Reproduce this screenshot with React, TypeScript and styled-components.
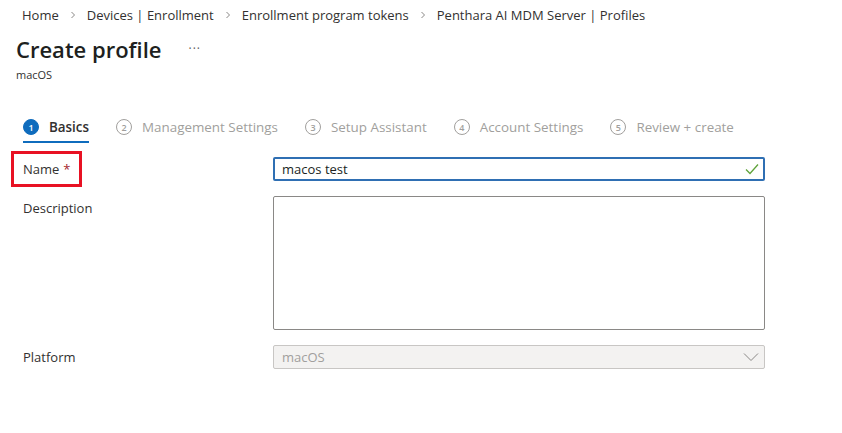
import styled, { createGlobalStyle } from "styled-components";

const Global = createGlobalStyle`
  html, body {
    margin: 0;
    padding: 0;
    background: #fff;
    font-family: "Segoe UI", "Open Sans", "Noto Sans", sans-serif;
    color: #323130;
  }
`;

const Page = styled.div`
  width: 842px;
  height: 433px;
  box-sizing: border-box;
  padding: 5px 0 0 16px;
  overflow: hidden;
`;

const Crumbs = styled.nav`
  display: flex;
  align-items: center;
  height: 20px;
  padding-left: 6px;
  font-size: 13px;
  color: #323130;
`;

const Sep = styled.span`
  display: flex;
  margin: 0 11px;
`;

const TitleRow = styled.div`
  display: flex;
  align-items: center;
  margin-top: 10px;
  height: 28px;
`;

const Title = styled.h1`
  margin: 0;
  font-size: 22px;
  font-weight: 600;
  color: #201f1e;
`;

const More = styled.span`
  margin-left: 27px;
  font-size: 12px;
  color: #605e5c;
  letter-spacing: 1px;
  position: relative;
  top: -1px;
`;

const Sub = styled.div`
  margin-top: 4px;
  font-size: 11px;
  color: #323130;
`;

const Steps = styled.div`
  display: flex;
  align-items: center;
  margin-top: 30px;
  padding-left: 7px;
  height: 30px;
`;

const Step = styled.div<{ $active?: boolean }>`
  display: flex;
  align-items: center;
  gap: 10px;
  height: 30px;
  margin-right: 27px;
  position: relative;
  font-size: 13.4px;
  font-weight: ${(p) => (p.$active ? 600 : 400)};
  color: ${(p) => (p.$active ? "#323130" : "#a19f9d")};
  ${(p) =>
    p.$active &&
    `&::after {
      content: "";
      position: absolute;
      left: 0;
      right: 0;
      bottom: -1px;
      height: 2px;
      background: #0f6cbd;
    }`}
`;

const Num = styled.span<{ $active?: boolean }>`
  width: 16px;
  height: 16px;
  box-sizing: border-box;
  border-radius: 50%;
  display: flex;
  align-items: center;
  justify-content: center;
  font-size: 9px;
  font-weight: 600;
  border: 1px solid ${(p) => (p.$active ? "#0f6cbd" : "#a19f9d")};
  background: ${(p) => (p.$active ? "#0f6cbd" : "#fff")};
  color: ${(p) => (p.$active ? "#fff" : "#a19f9d")};
`;

const Form = styled.div`
  margin-top: 15px;
  display: grid;
  grid-template-columns: 257px 492px;
  row-gap: 15px;
`;

const Label = styled.div<{ $flag?: boolean }>`
  font-size: 13px;
  color: #323130;
  padding-left: 7px;
  height: 24px;
  display: flex;
  align-items: center;
  align-self: start;
  ${(p) =>
    p.$flag &&
    `outline: 3px solid #e81123;
     outline-offset: 0;
     margin: -3px 0 -3px -2px;
     padding: 3px 8px 3px 9px;
     width: fit-content;
     height: 24px;`}
`;

const Star = styled.span`
  color: #a4262c;
  margin-left: 4px;
`;

const Field = styled.div<{ $focus?: boolean; $disabled?: boolean; $h?: number }>`
  height: ${(p) => p.$h ?? 24}px;
  box-sizing: border-box;
  border: ${(p) =>
    p.$focus ? "2px solid #2f6fb3" : p.$disabled ? "1px solid #c8c6c4" : "1px solid #8a8886"};
  border-radius: 2px;
  background: ${(p) => (p.$disabled ? "#f3f2f1" : "#fff")};
  display: flex;
  align-items: center;
  justify-content: space-between;
  padding: 0 ${(p) => (p.$focus ? 4 : 5)}px 0 ${(p) => (p.$focus ? 7 : 8)}px;
  font-size: 13px;
  color: ${(p) => (p.$disabled ? "#a19f9d" : "#201f1e")};
`;

const steps = [
  "Basics",
  "Management Settings",
  "Setup Assistant",
  "Account Settings",
  "Review + create",
];

const Chevron = () => (
  <svg width="6" height="8" viewBox="0 0 6 8">
    <path d="M1.5 1 L4.5 4 L1.5 7" fill="none" stroke="#8a8886" strokeWidth="1" />
  </svg>
);

export default function App() {
  const crumbs = [
    "Home",
    "Devices | Enrollment",
    "Enrollment program tokens",
    "Penthara AI MDM Server | Profiles",
  ];
  return (
    <Page>
      <Global />
      <Crumbs>
        {crumbs.map((c, i) => (
          <span key={c} style={{ display: "contents" }}>
            {i > 0 && (
              <Sep>
                <Chevron />
              </Sep>
            )}
            <span>{c}</span>
          </span>
        ))}
      </Crumbs>
      <TitleRow>
        <Title>Create profile</Title>
        <More>···</More>
      </TitleRow>
      <Sub>macOS</Sub>
      <Steps>
        {steps.map((s, i) => (
          <Step key={s} $active={i === 0}>
            <Num $active={i === 0}>{i + 1}</Num>
            {s}
          </Step>
        ))}
      </Steps>
      <Form>
        <Label $flag>
          Name<Star>*</Star>
        </Label>
        <Field $focus>
          <span>macos test</span>
          <svg width="14" height="12" viewBox="0 0 14 12">
            <path d="M1 6.5 L5 10.5 L13 1.5" fill="none" stroke="#5fa33a" strokeWidth="1.3" />
          </svg>
        </Field>
        <Label>Description</Label>
        <Field $h={134} />
        <Label>Platform</Label>
        <Field $disabled>
          <span>macOS</span>
          <svg width="16" height="10" viewBox="0 0 16 10">
            <path d="M1 1.5 L8 8.5 L15 1.5" fill="none" stroke="#8a8886" strokeWidth="1" />
          </svg>
        </Field>
      </Form>
    </Page>
  );
}
